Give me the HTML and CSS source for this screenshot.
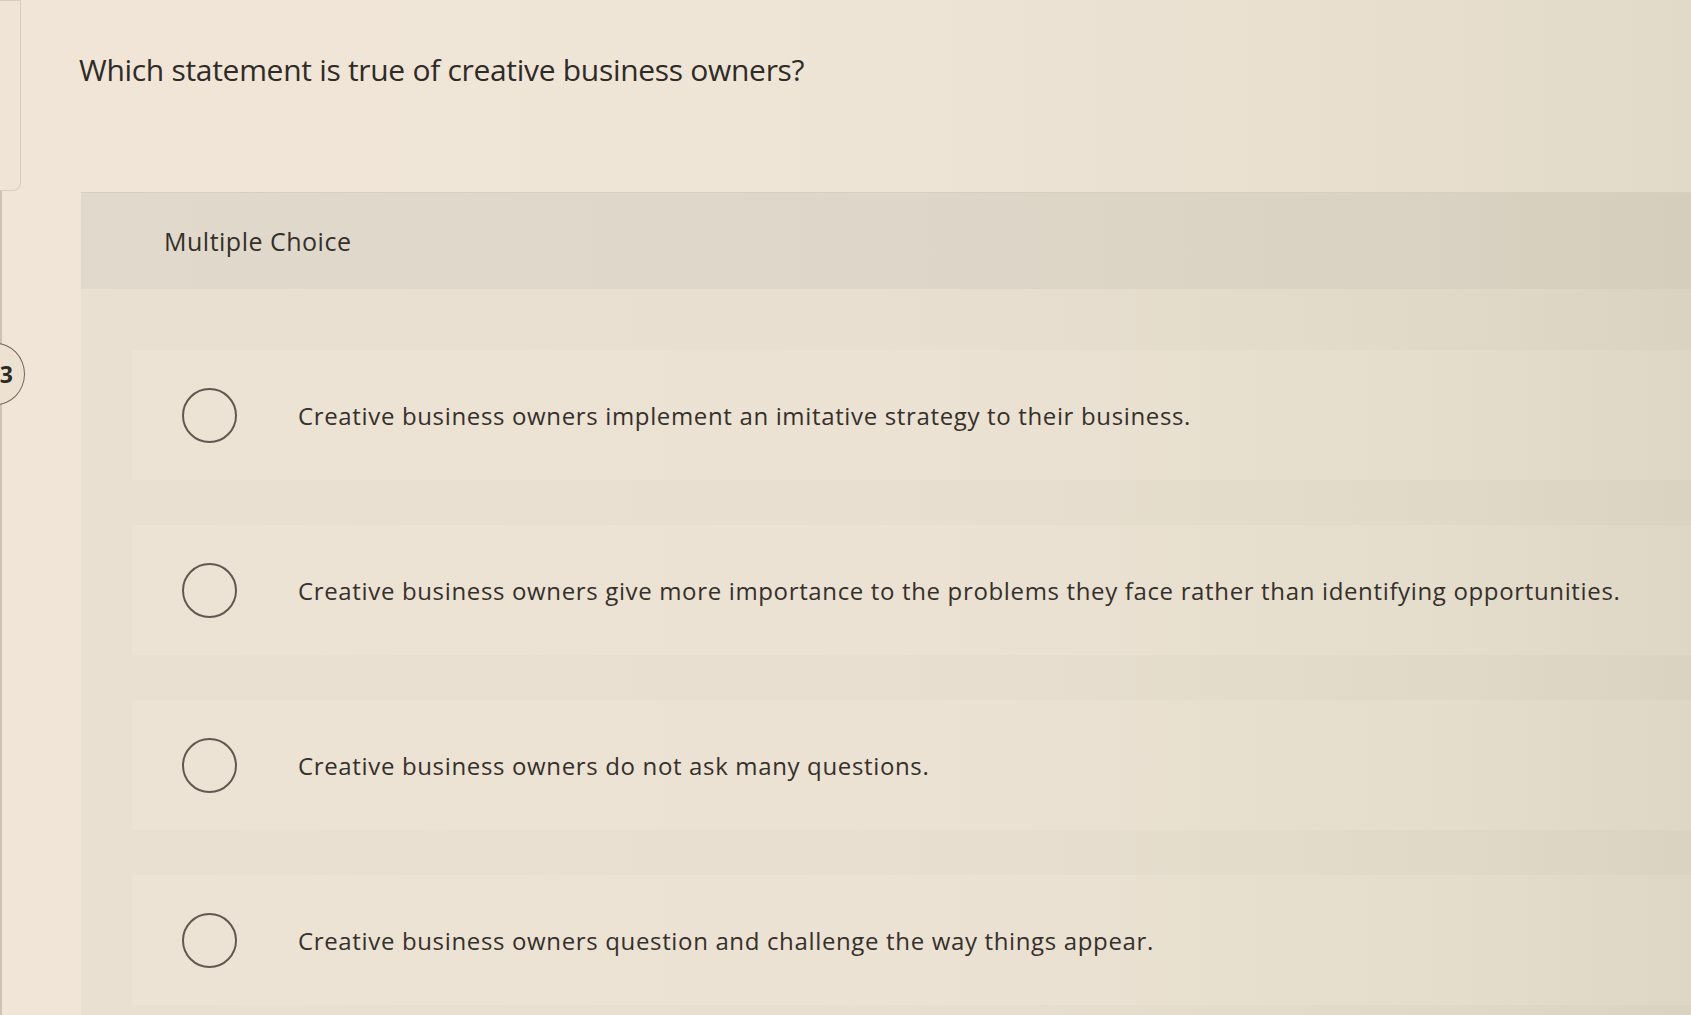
FILE: index.html
```html
<!DOCTYPE html>
<html lang="en">
<head>
<meta charset="utf-8">
<title>Multiple Choice</title>
<link rel="stylesheet" href="styles.css">
</head>
<body>
<div class="page">
  <aside class="gutter">
    <div class="nav-box"></div>
    <div class="badge"><span>3</span></div>
  </aside>
  <main class="main">
    <h1 class="question">Which statement is true of creative business owners?</h1>
    <section class="panel">
      <div class="panel-head">Multiple Choice</div>
      <div class="panel-body">
        <label class="option"><span class="radio"></span><span class="opt-text">Creative business owners implement an imitative strategy to their business.</span></label>
        <label class="option"><span class="radio"></span><span class="opt-text">Creative business owners give more importance to the problems they face rather than identifying opportunities.</span></label>
        <label class="option"><span class="radio"></span><span class="opt-text">Creative business owners do not ask many questions.</span></label>
        <label class="option"><span class="radio"></span><span class="opt-text">Creative business owners question and challenge the way things appear.</span></label>
      </div>
    </section>
  </main>
</div>
</body>
</html>
```

FILE: styles.css
```css
html, body {
  margin: 0;
  padding: 0;
  height: 100%;
  overflow: hidden;
}
body {
  font-family: "Open Sans", Lato, "Liberation Sans", sans-serif;
  color: #37322d;
  background: linear-gradient(90deg, #f0e5d6 0%, #efe5d7 45%, #e8dfcf 80%, #e2dac8 100%);
}
.page {
  display: flex;
  height: 1015px;
  border-left: 2px solid #cfc4b4;
}
.gutter {
  width: 77px;
  flex: none;
  display: flex;
  flex-direction: column;
}
.nav-box {
  height: 189px;
  width: 20px;
  margin-left: -2px;
  border: 1px solid #d8ccbb;
  border-left: none;
  border-radius: 0 0 8px 0;
  background: #efe4d5;
}
.badge {
  margin-top: 152px;
  margin-left: -36px;
  width: 59px;
  height: 62px;
  border: 1.5px solid #6d655c;
  border-radius: 50%;
  background: #ede2d2;
  display: flex;
  align-items: center;
  justify-content: flex-end;
  padding-right: 11px;
  box-sizing: border-box;
  font-weight: 700;
  font-size: 23px;
  color: #2e2a26;
}
.main {
  flex: 1;
  display: flex;
  flex-direction: column;
}
.question {
  margin: 50px 0 0 0;
  height: 40px;
  line-height: 40px;
  font-size: 30px;
  font-weight: 400;
  letter-spacing: -0.3px;
  color: #2f2b27;
}
.panel {
  margin-top: 102px;
  margin-left: 2px;
  flex: 1;
  background: linear-gradient(90deg, #e9e0d1 0%, #e8dfd0 50%, #e1d9c8 85%, #dbd3c1 100%);
}
.panel-head {
  height: 97px;
  padding-left: 83px;
  display: flex;
  align-items: center;
  font-size: 25px;
  letter-spacing: 0.5px;
  color: #35302b;
  background: linear-gradient(90deg, #e1d9cc 0%, #ded6c8 50%, #d9d1c1 85%, #d6cebc 100%);
  border-top: 1px solid #d8cfc1;
  box-sizing: border-box;
}
.panel-body {
  padding: 61px 0 0 51px;
  display: flex;
  flex-direction: column;
  gap: 45px;
}
.option {
  height: 130px;
  display: flex;
  align-items: center;
  padding-left: 50px;
  background: linear-gradient(90deg, #ede3d5 0%, #ebe2d3 50%, #e5ddcc 85%, #dfd7c6 100%);
}
.radio {
  width: 55px;
  height: 55px;
  flex: none;
  border: 2px solid #5f5952;
  border-radius: 50%;
  box-sizing: border-box;
}
.opt-text {
  margin-left: 61px;
  font-size: 24px;
  letter-spacing: 0.65px;
  color: #35302b;
}
```
